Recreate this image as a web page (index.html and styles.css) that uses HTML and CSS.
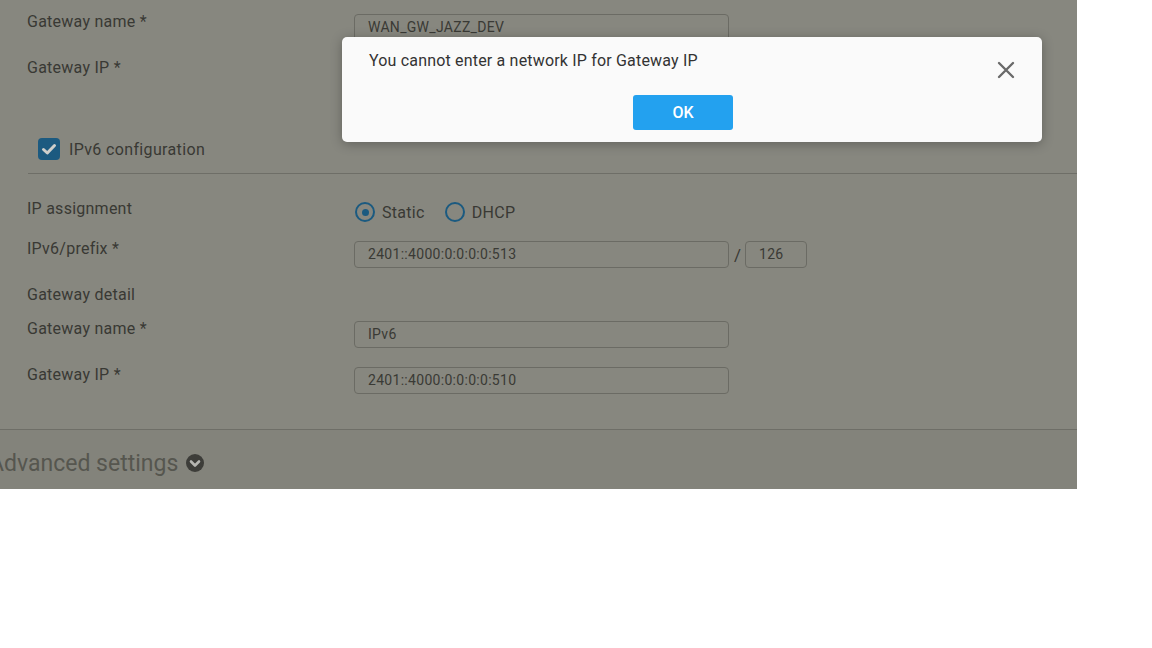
FILE: index.html
```html
<!DOCTYPE html>
<html>
<head>
<meta charset="utf-8">
<link rel="stylesheet" href="styles.css">
</head>
<body>
<div class="page">
  <div class="sec1">
    <div class="row">
      <div class="label">Gateway name *</div>
      <div class="ctl"><div class="input w375">WAN_GW_JAZZ_DEV</div></div>
    </div>
    <div class="row r2">
      <div class="label">Gateway IP *</div>
      <div class="ctl"><div class="input w375"></div></div>
    </div>
    <div class="check-row">
      <span class="checkbox"><svg width="22" height="22" viewBox="0 0 22 22"><path d="M5.5 11.5 L9.3 15 L16.5 7.5" fill="none" stroke="#cfcfcb" stroke-width="3" stroke-linecap="round" stroke-linejoin="round"/></svg></span>
      <span class="check-text">IPv6 configuration</span>
    </div>
  </div>
  <div class="hr hr1"></div>
  <div class="sec2">
    <div class="row ra">
      <div class="label">IP assignment</div>
      <div class="ctl radios">
        <span class="radio on"></span><span class="rtext">Static</span>
        <span class="radio"></span><span class="rtext">DHCP</span>
      </div>
    </div>
    <div class="row rp">
      <div class="label">IPv6/prefix *</div>
      <div class="ctl prefix">
        <div class="input w375">2401::4000:0:0:0:0:513</div>
        <span class="slash">/</span>
        <div class="input w62">126</div>
      </div>
    </div>
    <div class="row rd">
      <div class="label">Gateway detail</div>
    </div>
    <div class="row rn">
      <div class="label">Gateway name *</div>
      <div class="ctl"><div class="input w375">IPv6</div></div>
    </div>
    <div class="row ri">
      <div class="label">Gateway IP *</div>
      <div class="ctl"><div class="input w375">2401::4000:0:0:0:0:510</div></div>
    </div>
  </div>
  <div class="hr hr2"></div>
  <div class="advanced">
    <span class="adv-text">Advanced settings</span>
    <svg class="adv-icon" width="18" height="18" viewBox="0 0 18 18"><circle cx="9" cy="9" r="9" fill="#3d3d39"/><path d="M5 7.5 L9 11.5 L13 7.5" fill="none" stroke="#b5b5b1" stroke-width="2.6" stroke-linecap="round" stroke-linejoin="round"/></svg>
  </div>

  <div class="dialog">
    <div class="dlg-msg">You cannot enter a network IP for Gateway IP</div>
    <svg class="dlg-close" width="18" height="18" viewBox="0 0 18 18"><path d="M2 2 L16 16 M16 2 L2 16" stroke="#6a6a6a" stroke-width="2.4" stroke-linecap="round"/></svg>
    <div class="dlg-actions"><button class="ok">OK</button></div>
  </div>
</div>
</body>
</html>
```

FILE: styles.css
```css
html, body {
  margin: 0;
  padding: 0;
  background: #ffffff;
}
body {
  font-family: Roboto, "Liberation Sans", sans-serif;
  width: 1152px;
  height: 648px;
  overflow: hidden;
}
.page {
  position: relative;
  width: 1077px;
  height: 489px;
  background: #87877f;
  overflow: hidden;
  color: #3a3a35;
}
.sec1 {
  padding: 11px 0 0 27px;
}
.sec2 {
  padding-left: 27px;
}
.row {
  display: flex;
  align-items: flex-start;
  height: 30px;
}
.label {
  width: 327px;
  line-height: 20px;
  padding-top: 1px;
  font-size: 16px;
  letter-spacing: 0.25px;
  color: #393934;
}
.ctl {
  padding-top: 3px;
  display: flex;
  align-items: center;
}
.input {
  box-sizing: border-box;
  height: 27px;
  border: 1px solid #6b6b64;
  border-radius: 4px;
  font-size: 14px;
  line-height: 25px;
  padding-left: 13px;
  color: #3a3a35;
  letter-spacing: 0.3px;
}
.w375 { width: 375px; }
.w62 { width: 62px; }
.r2 { margin-top: 16px; }
.check-row {
  margin-top: 51px;
  margin-left: 11px;
  display: flex;
  align-items: center;
  height: 22px;
}
.checkbox {
  width: 22px;
  height: 22px;
  border-radius: 4px;
  background: #1c5a80;
  display: inline-flex;
}
.check-text {
  margin-left: 9px;
  font-size: 16px;
  letter-spacing: 0.35px;
  color: #393934;
}
.hr {
  height: 1px;
  background: #6e6e67;
}
.hr1 {
  margin-top: 13px;
  margin-left: 28px;
}
.ra { margin-top: 24px; }
.radios { padding-top: 4px; }
.radio {
  box-sizing: border-box;
  width: 20px;
  height: 20px;
  border-radius: 50%;
  border: 2.5px solid #1b5a80;
  display: inline-flex;
  align-items: center;
  justify-content: center;
  margin-left: 1px;
}
.radio.on::after {
  content: "";
  width: 7px;
  height: 7px;
  border-radius: 50%;
  background: #1b5a80;
}
.rtext {
  font-size: 16px;
  letter-spacing: 0.3px;
  margin-left: 7px;
  margin-right: 19px;
  color: #393934;
}
.rp { margin-top: 10px; }
.slash {
  font-size: 17px;
  margin: 0 4px 0 5px;
  color: #393934;
}
.rd { margin-top: 16px; height: 20px; }
.rn { margin-top: 14px; }
.ri { margin-top: 16px; }
.hr2 {
  margin-top: 35px;
}
.advanced {
  height: 66px;
  background: #83837b;
  display: flex;
  align-items: center;
  margin-left: -11px;
}
.adv-text {
  font-size: 23px;
  color: #56564f;
}
.adv-icon {
  margin-left: 8px;
}
.dialog {
  position: absolute;
  left: 342px;
  top: 37px;
  width: 700px;
  height: 105px;
  box-sizing: border-box;
  background: #fafafa;
  border-radius: 5px;
  box-shadow: 0 2px 12px rgba(0, 0, 0, 0.28);
  padding: 13px 0 0 27px;
}
.dlg-msg {
  font-size: 16px;
  line-height: 20px;
  letter-spacing: 0.18px;
  color: #333333;
  padding-top: 1px;
}
.dlg-close {
  position: absolute;
  left: 655px;
  top: 24px;
}
.dlg-actions {
  display: flex;
  justify-content: center;
  margin-top: 24px;
  padding-right: 45px;
}
.ok {
  width: 100px;
  height: 35px;
  border: none;
  border-radius: 3px;
  background: #23a1ef;
  color: #ffffff;
  font-family: Roboto, "Liberation Sans", sans-serif;
  font-size: 16px;
  font-weight: 500;
}
```
